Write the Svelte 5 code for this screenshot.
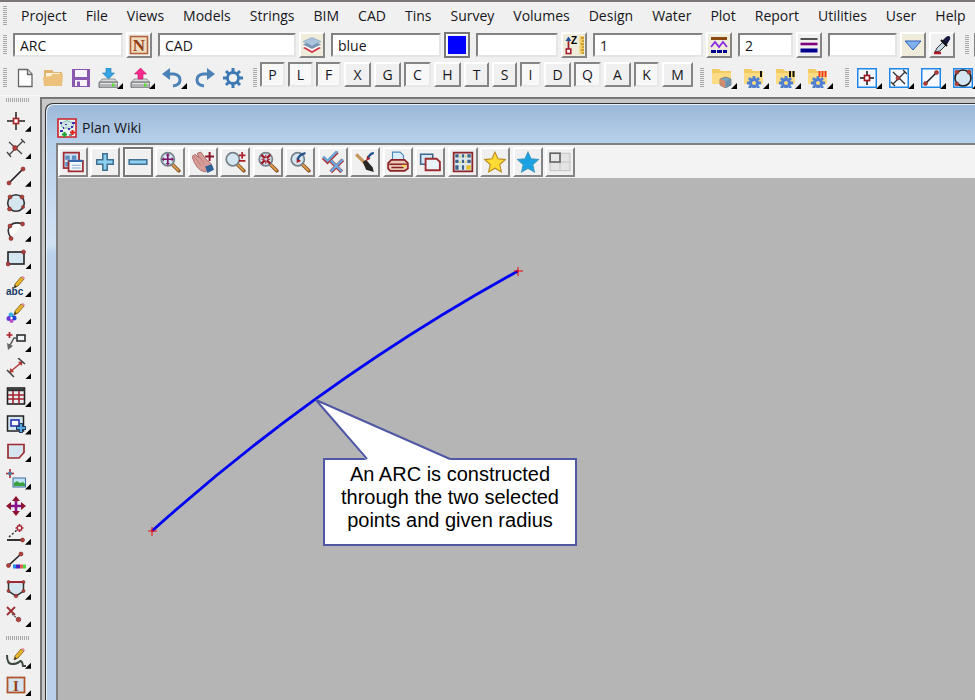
<script>
  const menus = ['Project', 'File', 'Views', 'Models', 'Strings', 'BIM', 'CAD', 'Tins', 'Survey', 'Volumes', 'Design', 'Water', 'Plot', 'Report', 'Utilities', 'User', 'Help'];

  const ball = (x, y, r = 2) => `<circle cx="${x}" cy="${y}" r="${r}" fill="#b0413c" stroke="#7a2422" stroke-width=".6"/>`;
  const folder = '<path d="M0 1h7l2 2h10v12H0z" fill="#f2cb62"/><path d="M0 5h19v11H0z" fill="#fbdc84"/>';
  const gear = '<circle cx="10" cy="15" r="3.500" fill="#fbdc84" stroke="#4f7fd0" stroke-width="3"/><path d="M10 8v4M10 18v2M3 15h3M14 15h3M5 10l2 2M15 10l-2 2M5 20l2-2M15 20l-2-2" stroke="#4f7fd0" stroke-width="2.800"/>';
  const drive = '<path d="M4 11h13l3 4H1z" fill="#d6d8da" stroke="#777" stroke-width=".7"/><rect x="1" y="14" width="19" height="6" rx="1" fill="#b2b5b8" stroke="#555" stroke-width=".8"/><path d="M2 15.500h17" stroke="#e8e8e8"/><rect x="14" y="15.500" width="2.500" height="3" fill="#53e02c"/>';
  const lens = '<path d="M12 12l6 6" stroke="#8a5a2c" stroke-width="3.400" stroke-linecap="round"/><path d="M12 12l5.500 5.500" stroke="#e4a04c" stroke-width="1.600" stroke-linecap="round"/><circle cx="8" cy="7.500" r="6" fill="#d3e6f2" stroke="#77828a" stroke-width="1.600"/>';
  const pencil = '<path d="M8 12l1-4 6-7 3 2-6 7z" fill="#e7b52c" stroke="#7c5a12" stroke-width=".8"/><path d="M15 1l2-1 2 2-1 1.500z" fill="#d98a94"/><path d="M8 12l1-3 2 1.500z" fill="#333"/>';
  const frame = '<rect x=".750" y=".750" width="18.500" height="18.500" fill="#f6f9fd" stroke="#1e86e8" stroke-width="1.500"/>';
  const shade = '#d5e6f0';

  const art = {
    namePick: '<rect x="1.500" y="1.500" width="17" height="17" fill="#f0dcc0" stroke="#b4653a" stroke-width="1.600"/><text x="10" y="16" text-anchor="middle" font-family="Liberation Serif, serif" font-weight="bold" font-size="17" fill="#913c12">N</text>',
    layers: '<path d="M1 13l9-4 9 4-9 5z" fill="#cf3340"/><path d="M1 11l9-4 9 4-9 5z" fill="#fff"/><path d="M1 9.500l9-4 9 4-9 4.500z" fill="#7895b0"/><path d="M1 6.500l9-4 9 4-9 4.500z" fill="#a9c4dc" stroke="#7d9db8" stroke-width=".6"/>',
    colour: '<path fill="#00f" d="M1 1h18v18H1z"/>',
    height: '<path d="M4.500 3v12" stroke="#9c2630" stroke-width="1.800"/><path d="M1.500 6l3-4.500 3 4.500z" fill="#235a9a"/><rect x="2.300" y="14" width="4.500" height="4.500" fill="#fff" stroke="#a4202c" stroke-width="1.600"/><text x="7" y="8.500" font-family="Liberation Sans, sans-serif" font-size="10" font-weight="bold">Z</text><path d="M15.500 1H20v18h-4.500z" fill="#f3cc62"/><path d="M20 3h-3M20 6h-2M20 9h-3M20 12h-2M20 15h-3M20 18h-2" stroke="#9c7014"/>',
    weights: '<path d="M2 3.500h16" stroke="#8a4a12" stroke-width="3"/><path d="M2 12l4-5 4 5 4-5 4 5" fill="none" stroke="#8a2be2" stroke-width="1.800"/><path d="M2 16.500h16" stroke="#000090" stroke-width="3" stroke-dasharray="5 1"/>',
    lines: '<path d="M1.500 4h17" stroke="#111" stroke-width="1.400"/><path d="M1.500 9h17" stroke="#800080" stroke-width="2.600"/><path d="M1.500 15.500h17" stroke="#000090" stroke-width="4"/>',
    drop: '<path d="M2 6h16l-8 9z" fill="#7fb0f0" stroke="#2c5fb4"/>',
    dropper: '<path d="M3 17l2-4 6-6 3 3-6 6z" fill="#c8d8e4" stroke="#333"/><path d="M10 6l4-4q3-2 4 0t-1 4l-3 5z" fill="#16183c"/><path d="M2 18h7" stroke="#b01828" stroke-width="2.500"/><path d="M9 5l6 6" stroke="#111" stroke-width="2"/>',
    file: '<path d="M3.500 1.500h9l4.500 4.500v12.500H3.500z" fill="#fff" stroke="#666" stroke-width="1.300"/><path d="M12.500 1.500v5H17" fill="#ddd" stroke="#666" stroke-width="1.300"/>',
    open: '<path d="M1 2h8l2 2h8v5H1z" fill="#e0b470"/><path d="M3 5h14v8H3z" fill="#fff3dc"/><path d="M0 9l8-1 1-2h11l-1 12H1z" fill="#ecc17c"/>',
    save: '<path d="M1 1h18v18H1z" fill="#8a57b0"/><path d="M4 2h12v7H4z" fill="#f7f2fa"/><path d="M4 12h12v6H4z" fill="#f7f2fa"/><path d="M6 13.500h3V18H6z" fill="#8a57b0"/>',
    load: drive + '<path d="M8 0h5v5h3.500l-6 6-6-6H8z" fill="#35a5e4" stroke="#1b74ae" stroke-width=".6"/>',
    send: drive + '<path d="M8 11h5V6h3.500l-6-6-6 6H8z" fill="#fa2a8c" stroke="#c01064" stroke-width=".6"/>',
    undo: '<path d="M4 6h8q6 1 6 6t-7 6" fill="none" stroke="#4a82b8" stroke-width="3"/><path d="M8 0v12L0 6z" fill="#4a82b8"/>',
    redo: '<path d="M16 6H8q-6 1-6 6t7 6" fill="none" stroke="#4a82b8" stroke-width="3"/><path d="M12 0v12l8-6z" fill="#4a82b8"/>',
    cog: '<circle cx="10" cy="10" r="5.500" fill="none" stroke="#3d79b4" stroke-width="2.800"/><path d="M10 0v4M10 16v4M0 10h4M16 10h4M3 3l3 3M14 14l3 3M17 3l-3 3M6 14l-3 3" stroke="#3d79b4" stroke-width="3"/>',
    fold0: folder + '<path d="M8 11l5.500-2 5.500 2v6l-5.500 3L8 17z" fill="#76a5c4" stroke="#7a6a60" stroke-width=".7"/><path d="M8 11l5.500 2v7L8 17z" fill="#d48a6c"/><path d="M13.500 13l5.500-2v6l-5.500 3z" fill="#6a92ae"/>',
    fold1: folder + gear + '<path d="M17 3v6" stroke="#111" stroke-width="2"/>',
    fold2: folder + gear + '<path d="M14 3v6M17.500 3v6" stroke="#111" stroke-width="2"/>',
    fold3: folder + gear + '<path d="M11.500 3v6M14.500 3v6M17.500 3v6" stroke="#f03020" stroke-width="1.800"/>',
    snapPoint: frame + '<path d="M10 3v5M10 12v5M3 10h5M12 10h5" stroke="#111" stroke-width="1.500"/><rect x="7.500" y="7.500" width="5" height="5" fill="#fff" stroke="#a01822" stroke-width="1.700"/>',
    snapCross: frame + '<path d="M4 16L16 4M4 4l12 12M2 14l4 4M14 2l4 4" stroke="#333" stroke-width="1.300"/>' + ball(9, 10),
    snapLine: frame + '<path d="M4 16L16 4" stroke="#222" stroke-width="1.600"/>' + ball(4.5, 15.5) + ball(15.5, 4.5),
    snapRing: frame + `<circle cx="10" cy="10" r="8" fill="${shade}" stroke="#222" stroke-width="1.600"/>` + ball(4, 4) + ball(16, 4) + ball(4, 16),
    point: '<path d="M10 1v6M10 13v6M1 10h6M13 10h6" stroke="#222" stroke-width="1.500"/><rect x="7.500" y="7.500" width="5" height="5" fill="#fff" stroke="#a52a2a" stroke-width="1.700"/>',
    cross: '<path d="M3 17L17 3M3 4l13 12M1 14l4 5M15 1l4 4" stroke="#444" stroke-width="1.300"/>' + ball(9, 10, 2.4),
    line: '<path d="M3 17L17 3" stroke="#222" stroke-width="1.700"/>' + ball(3, 17) + ball(17, 3),
    circle: `<circle cx="10" cy="10" r="8.300" fill="${shade}" stroke="#333" stroke-width="1.600"/>` + ball(4, 4) + ball(16, 4) + ball(3.5, 16) + ball(17, 14, 1.5),
    arc: '<path d="M5 17Q0 10 4 5t13-2" fill="#fff" stroke="#333" stroke-width="1.600"/>' + ball(5, 17.5) + ball(4, 5) + ball(16.5, 3),
    rect: `<rect x="2" y="4" width="16" height="12" fill="${shade}" stroke="#222" stroke-width="1.600"/>` + ball(17.5, 4) + ball(2, 16),
    text: pencil + '<text x="0" y="19" font-family="Liberation Sans, sans-serif" font-size="10" font-weight="bold" fill="#173a66">abc</text>',
    paint: pencil + '<circle cx="5" cy="12" r="2.500" fill="#3ab0e8"/><circle cx="3" cy="15.500" r="2.500" fill="#6a35d8"/><circle cx="8" cy="15" r="2.500" fill="#2340d8"/><circle cx="5.500" cy="18" r="2" fill="#c050c8"/><circle cx="5.500" cy="15" r="1.200" fill="#fff"/>',
    leader: '<path d="M3.500 1v6M.5 4h6" stroke="#b02028" stroke-width="1.700"/><rect x="11" y="4" width="8" height="6" fill="#eef4f8" stroke="#222" stroke-width="1.500"/><path d="M11 7H8l-5 9" fill="none" stroke="#555" stroke-width="1.500"/><path d="M1 12l1 7 5-4z" fill="#666"/>',
    dim: '<path d="M4 14L16 4" stroke="#b33a34" stroke-width="1.500"/><path d="M3 15l1.500-5 3.500 4zM17 3l-1.500 5-3.500-4z" fill="#b33a34"/><path d="M1 12l7 7M12 0l7 6" stroke="#444" stroke-width="1.600"/>',
    grid: '<rect x="1.500" y="2" width="17" height="16" fill="#e6eef2" stroke="#222" stroke-width="1.600"/><path d="M1 4h18" stroke="#333" stroke-width="2.500"/><path d="M2 9h16M2 13h16M7 5v13M13 5v13" stroke="#a52330" stroke-width="1.600"/>',
    group: `<rect x="1.500" y="2" width="16" height="15" fill="${shade}" stroke="#222" stroke-width="1.500"/><rect x="5" y="6" width="8" height="6" fill="#fff" stroke="#2430b0" stroke-width="1.600"/><path d="M15 9v10M10 14h10" stroke="#23406a" stroke-width="4"/><path d="M15 10v8M11 14h8" stroke="#5aa8e0" stroke-width="2"/>`,
    polygon: `<path d="M2 3.500h16v8L13 17H2z" fill="${shade}" stroke="#9c2c30" stroke-width="1.700"/>`,
    image: '<path d="M4 0v9M0 4.500h8" stroke="#b02028" stroke-width="1.600"/><circle cx="4" cy="4.500" r="2" fill="#4c7a9c"/><rect x="7" y="9" width="12.500" height="9" fill="#bfe3fa" stroke="#3c6c9c"/><path d="M8 17v-3l3-2 3 2 3-1 2 2v2z" fill="#3ca03c"/>',
    move: '<path d="M10 2v16M2 10h16" stroke="#8a108a" stroke-width="2.600"/><path d="M10 0l4 5H6zM10 20l4-5H6zM0 10l5-4v8zM20 10l-5-4v8z" fill="#8c1832"/>',
    offset: '<path d="M13.500 0v8M9.500 4h8" stroke="#a52330" stroke-width="1.600"/><rect x="11.500" y="2" width="4" height="4" fill="#fff" stroke="#a52330" stroke-width="1.300"/><path d="M3 13l8-7" stroke="#333" stroke-width="1.500" stroke-dasharray="2 2"/><path d="M1 16h16" stroke="#333" stroke-width="2"/>' + ball(16.5, 16),
    spectrum: '<path d="M3 14L15 3" stroke="#222" stroke-width="1.600"/>' + ball(2.5, 14.5) + ball(15, 3) + '<path d="M7 13.500h3v4H7z" fill="#2090f0"/><path d="M10 13.500h4v4h-4z" fill="#4a20c0"/><path d="M14 13.500h3v4h-3z" fill="#e85a5a"/><path d="M17 13.500h3v4h-3z" fill="#50d840"/>',
    shield: `<path d="M2.500 3h15v9L10 17l-7.500-5z" fill="${shade}" stroke="#333" stroke-width="1.500"/><path d="M2.500 3h15" stroke="#a52330" stroke-width="1.800"/>` + ball(2.5, 3, 1.5) + ball(17.5, 3, 1.5) + ball(2.5, 12, 1.5) + ball(17.5, 12, 1.5) + ball(10, 17, 1.8),
    remove: '<path d="M1 1l8 8M9 1L1 9" stroke="#9c2c30" stroke-width="1.800"/><path d="M6 8l6 5" stroke="#555" stroke-width="1.400" stroke-dasharray="2 1"/>' + ball(12.5, 13.5, 2.3),
    sketch: '<path d="M1 7q0 9 5 9t7-2q3-3 4 4h3" fill="none" stroke="#3a463e" stroke-width="2"/>' + pencil,
    textBox: `<rect x="1.500" y="2.500" width="17" height="15" fill="${shade}" stroke="#b0562c" stroke-width="1.800"/><text x="10" y="15.500" text-anchor="middle" font-family="Liberation Serif, serif" font-weight="bold" font-size="15" fill="#97401c">I</text>`,
    plan: '<path fill="#e8f4f0" stroke="#cc2028" stroke-width="1.600" d="M1 1h18v18H1z"/><path d="M5 9q-2-4 2-5 3-3 6 0 5 0 3 5-3 3-6 1-4 1-5-1z" fill="#cfe6e4" stroke="#7fb8b0"/><path d="M3 4h2v2H3zM15 4h3v2h-3zM3 12h3v2H3zM11 10h2v2h-2zM8 6h2v1H8zM6 9h1v2H6zM14 8h2v2h-2z" fill="#4428b0"/><path d="M13 14.500h5M15.500 12v5" stroke="#e02020" stroke-width="2"/><path d="M5 16.500h5M7.500 14v5" stroke="#18a030" stroke-width="2"/><path d="M12 17h3" stroke="#222"/>',
    views: '<rect x="1.500" y="1.500" width="14" height="14" fill="#cfe2f4" stroke="#9c2c30" stroke-width="1.600"/><path d="M3 4h4v4H3zM9 4h4v4H9zM3 10h3v4H3z" fill="#5c8cc4"/><rect x="6" y="9" width="13" height="9.500" fill="#f3f8fc" stroke="#9c2c30" stroke-width="1.600"/><path d="M6 9h13" stroke="#3868a8" stroke-width="2"/><path d="M9 13h8M9 15.500h8" stroke="#8ba8c4"/>',
    plus: '<path d="M8 2.500h4V8h5.500v4H12v5.500H8V12H2.500V8H8z" fill="#8fd0f2" stroke="#3f7092" stroke-width="1.400"/>',
    minus: '<path d="M2 8h16v4H2z" fill="#8fd0f2" stroke="#3f7092" stroke-width="1.400"/>',
    zoomAll: lens + '<path d="M8 3v9M3.500 7.500h9" stroke="#7c1468" stroke-width="1.500"/><path d="M8 2l2 2H6zM8 13l2-2H6zM2.500 7.500l2-2v4zM13.500 7.500l-2-2v4z" fill="#7c1468"/>',
    pan: '<path d="M0 5l3-2 3 3-1-4 3-1 6 8 3 2 1 4-6 4Q4 18 0 5z" fill="#d69c98" stroke="#a6645f" stroke-width=".8"/><path d="M2 5l6 8M5 3l6 8" stroke="#b87874" stroke-width=".8"/><path d="M12 14l6-2 2 5-6 3z" fill="#2c6096"/><path d="M16 1v8M12 5h8" stroke="#8c1428" stroke-width="1.800"/>',
    zoomStep: lens + '<path d="M16.500 1v6M13.500 4h6M13.500 9h6" stroke="#a82028" stroke-width="1.500"/>',
    zoomFit: lens + '<path d="M4 3.500l3 3M12 3.500l-3 3M4 11.500l3-3M12 11.500l-3-3" stroke="#a01420" stroke-width="2"/><path d="M4 7.500h3M9 7.500h3M8 3.500v3M8 8.500v3" stroke="#a01420"/>',
    zoomBack: lens + '<path d="M7 6v5l4-2z" fill="#a82028"/><path d="M8 8q1-5 7-6" fill="none" stroke="#20508c" stroke-width="2"/>',
    checks: '<path d="M1 6l4 4 9-9" fill="none" stroke="#b03038" stroke-width="3.200"/><path d="M1 5l4 4 9-9" fill="none" stroke="#6aa8dc" stroke-width="2.200"/><path d="M8 9l10 10M19 8L8 19" stroke="#b03038" stroke-width="3.400"/><path d="M8 8.500l10 10M19 7.500l-11 11" stroke="#6aa8dc" stroke-width="2.200"/>',
    brush: '<path d="M2 3l9 9" stroke="#c4955c" stroke-width="3"/><path d="M8 10l3-2 6 7 1 4-7-2z" fill="#2a2623"/><path d="M11 9l1-5 3 3z" fill="#b02028"/><path d="M13 6q2-4 5-4" fill="none" stroke="#20508c" stroke-width="2"/>',
    print: '<path d="M5 9V1h7l3 3v5z" fill="#d8ecfa" stroke="#4a86b8"/><path d="M4 8h12l3 3v5l-3 2H3l-2-2v-5z" fill="#e6c9b8" stroke="#8c2024" stroke-width="1.500"/><path d="M2 12h16M4 15h11" stroke="#8c2024" stroke-width="1.500"/><path d="M14 13.500h3" stroke="#ffda40" stroke-width="2"/>',
    copy: '<path d="M1.500 3h11v9h-11z" fill="#d7e9f5" stroke="#3c648c" stroke-width="1.400"/><path d="M6 7h10l3 3v7.500H6z" fill="#eaf4f8" stroke="#9c2c30" stroke-width="1.700"/>',
    matrix: '<path d="M1.500 1.500h17v17h-17z" fill="#dce8ee" stroke="#8c2428" stroke-width="1.600"/><path d="M3 3h3v3H3zM9 3h2v3H9zM14 3h3v3h-3zM3 8h3v3H3zM9 8h2v3H9zM14 8h3v3h-3zM3 13h3v4H3zM9 13h2v4H9z" fill="#3c6488"/><path d="M7 4h1v2H7zM12 4h1v2h-1zM7 9h1v2H7zM12 9h1v2h-1zM13 13h4v4h-4z" fill="#e5c22c"/>',
    star: '<path d="M10 1l2.700 6.100 6.600.7-5 4.500 1.500 6.700L10 15.600 4.200 19l1.500-6.700-5-4.500 6.600-.7z" fill="#ffdb35" stroke="#b98a1c"/>',
    starBlue: '<path d="M10 1l2.700 6.100 6.600.7-5 4.500 1.500 6.700L10 15.600 4.200 19l1.500-6.700-5-4.500 6.600-.7z" fill="#1ba2e2" stroke="#3a9ac4"/>',
    panes: '<path d="M1 2h18v16H1z" fill="#e4e4e4" stroke="#c4c4c4"/><path d="M10 2v16M1 10h18" stroke="#c4c4c4"/><rect x="1" y="2" width="9" height="8" fill="#e8e8e8" stroke="#666" stroke-width="1.500"/>'
  };

  const fields = [
    { label: 'Name', value: 'ARC', size: 'w110', icon: 'namePick' },
    { label: 'Model', value: 'CAD', size: 'w138', icon: 'layers', paper: true },
    { label: 'Colour', value: 'blue', size: 'w110', icon: 'colour', deep: true },
    { label: 'Height', value: '', size: 'w82', icon: 'height', paper: true },
    { label: 'Style', value: '1', size: 'w110', icon: 'weights', paper: true },
    { label: 'Weight', value: '2', size: 'w55', icon: 'lines' },
    { label: 'Tinable', value: '', size: 'w69', icon: 'drop', paper: true }
  ];
  const fileTools = [['file'], ['open'], ['save'], ['load', 1], ['send', 1], ['undo', 1], ['redo'], ['cog']];
  const letters = [...'PLFXGCHTSIDQAKM'];
  let active = $state([...'PLFCIQK']);
  const toggle = (k) => (active = active.includes(k) ? active.filter((a) => a !== k) : [...active, k]);
  const size = (k) => (k === 'I' ? 'thin' : k === 'M' ? 'wide' : 'PLFTSK'.includes(k) ? 'small' : 'mid');
  const folders = ['fold0', 'fold1', 'fold2', 'fold3'];
  const snaps = ['snapPoint', 'snapCross', 'snapLine', 'snapRing'];
  const side = ['point', 'cross', 'line', 'circle', 'arc', 'rect', 'text', 'paint', 'leader', 'dim', 'grid', 'group', 'polygon', 'image', 'move', 'offset', 'spectrum', 'shield', 'remove'];
  const viewTools = ['views', 'plus', 'minus', 'zoomAll', 'pan', 'zoomStep', 'zoomFit', 'zoomBack', 'checks', 'brush', 'print', 'copy', 'matrix', 'star', 'starBlue', 'panes'];
</script>

{#snippet icon(name)}
  <svg class="icon" viewBox="0 0 20 20" aria-hidden="true">{@html art[name]}</svg>
{/snippet}

{#snippet tool(name, more)}
  <button class="tool" class:more aria-label={name}>{@render icon(name)}</button>
{/snippet}

<div class="app">
  <nav class="menu">
    <span class="grip"></span>
    {#each menus as m}<button>{m}</button>{/each}
  </nav>

  <div class="fields">
    <span class="grip"></span>
    {#each fields as f}
      <input class={f.size} aria-label={f.label} value={f.value} />
      <button class="raised" class:paper={f.paper} class:deep={f.deep} aria-label={`Choose ${f.label}`}>{@render icon(f.icon)}</button>
    {/each}
    <button class="raised last" aria-label="Pick from drawing">{@render icon('dropper')}</button>
    <span class="grip end"></span>
    <input class="w110" aria-label="Text style" />
  </div>

  <div class="tools">
    <span class="grip"></span>
    <div class="group lead">{#each fileTools as [n, more]}{@render tool(n, !!more)}{/each}</div>
    <span class="grip"></span>
    <div class="letters">
      {#each letters as k}
        <button class={['key', size(k)]} class:on={active.includes(k)} aria-pressed={active.includes(k)} onclick={() => toggle(k)}>{k}</button>
      {/each}
    </div>
    <span class="grip"></span>
    <div class="group">{#each folders as n}{@render tool(n, true)}{/each}</div>
    <span class="grip"></span>
    <div class="group">{#each snaps as n}{@render tool(n, true)}{/each}</div>
  </div>

  <div class="body">
    <aside>
      <span class="grip flat"></span>
      <div class="stack">{#each side as n}{@render tool(n, true)}{/each}</div>
      <span class="grip flat"></span>
      <div class="stack pair">{#each ['sketch', 'textBox'] as n}{@render tool(n, true)}{/each}</div>
    </aside>

    <main>
      <section class="window">
        <header>{@render icon('plan')}<span>Plan Wiki</span></header>
        <div class="view">
          <div class="viewbar">
            {#each viewTools as n}
              <button class="raised big" class:deep={n === 'minus'} aria-label={n}>{@render icon(n)}</button>
            {/each}
          </div>
          <div class="canvas">
            <svg class="drawing" aria-label="Arc through two points">
              <path d="M94 353Q262 202 460 93" fill="none" stroke="#0000f4" stroke-width="2.800" />
              <path d="M90 353h9M94 349v9M456 93h9M460 89v9" stroke="#f00000" />
            </svg>
            <p class="callout">An ARC is constructed through the two selected points and given radius</p>
            <svg class="drawing" aria-hidden="true">
              <path d="M308 282L258 222L393 282" fill="#fff" />
              <path d="M309 281L258 222L392 281" fill="none" stroke="#5058a4" stroke-width="2" />
            </svg>
          </div>
        </div>
      </section>
    </main>
  </div>
</div>

<style>
  :global(body) { margin: 0; }
  .app {
    height: 100vh;
    box-sizing: border-box;
    display: flex;
    flex-direction: column;
    overflow: hidden;
    background: #f0f0f0;
    border-top: 2px solid #7c7678;
    font: 14px/20px "Open Sans", "Noto Sans", sans-serif;
    color: #161620;
  }
  button { font: inherit; color: inherit; margin: 0; padding: 0; border: 0; background: none; flex: none; box-sizing: border-box; }
  .icon { width: 20px; height: 20px; display: block; flex: none; }
  .grip {
    flex: none;
    width: 4px;
    height: 20px;
    background: repeating-linear-gradient(#a8a8a8 0 1px, #f0f0f0 1px 2px);
  }
  .grip.flat {
    width: 24px;
    height: 4px;
    background: repeating-linear-gradient(90deg, #a8a8a8 0 1px, #f0f0f0 1px 2px);
  }

  .menu { display: flex; align-items: center; height: 28px; padding-left: 3px; flex: none; gap: 19px; }
  .menu .grip { margin-right: -5px; }

  .fields { display: flex; align-items: center; height: 30px; padding-left: 3px; flex: none; }
  .fields .grip { margin-right: 6px; }
  .fields .end { margin: 0 5px 0 10px; }
  input {
    box-sizing: border-box;
    height: 24px;
    flex: none;
    font: inherit;
    color: inherit;
    padding: 0 5px;
    background: #fff;
    border: 2px solid;
    border-color: #828282 #e4e4e4 #e4e4e4 #828282;
    border-radius: 0;
    outline: 0;
  }
  .w110 { width: 110px; }
  .w138 { width: 138px; }
  .w82 { width: 82px; }
  .w55 { width: 55px; }
  .w69 { width: 69px; }
  .raised {
    width: 26px;
    height: 26px;
    border: 2px solid;
    border-color: #fff #858585 #858585 #fff;
    background: #f0f0f0;
    display: flex;
    align-items: center;
    justify-content: center;
  }
  .fields .raised { margin: 0 6px 0 3px; }
  .fields .raised:nth-last-child(4), .fields .raised.last { margin-right: 0; }
  .raised.paper { background: #f0ecdc; }
  .raised.deep { border-color: #777; box-shadow: inset 1px 1px #fff; }

  .tools { display: flex; align-items: flex-start; height: 35px; padding: 2px 0 0 3px; box-sizing: border-box; flex: none; }
  .tools .grip { margin-top: 6px; }
  .tools .group { display: flex; margin: 5px 8px 0 5px; }
  .tools .group.lead { margin: 5px 6px 0 4px; }
  .tool { width: 28px; height: 22px; display: flex; align-items: center; justify-content: center; position: relative; }
  .tool.more { width: 32px; justify-content: flex-start; padding-left: 3px; }
  .tool.more::after {
    content: "";
    position: absolute;
    right: 4px;
    bottom: 0;
    width: 6px;
    height: 6px;
    background: #000;
    clip-path: polygon(100% 0, 100% 100%, 0 100%);
  }
  .letters { display: flex; gap: 3px; margin: 0 7px 0 3px; }
  .key {
    height: 25px;
    line-height: 19px;
    border: 2px solid;
    border-color: #fff #858585 #858585 #fff;
  }
  .key.on { border-color: #858585 #e8e8e8 #e8e8e8 #858585; background: #f8f8f8; }
  .thin { width: 21px; }
  .small { width: 25px; }
  .mid { width: 27px; }
  .wide { width: 31px; }

  .body { flex: 1; min-height: 0; display: flex; }
  aside { width: 37px; padding: 2px 0 0 3px; flex: none; display: flex; flex-direction: column; border-top: 1px solid #f8f8f8; }
  aside .grip { margin-left: 3px; }
  .stack { display: grid; grid-auto-rows: 1fr; align-items: center; flex: none; height: 523px; margin: 5px 0 6px; }
  .stack.pair { height: 55px; margin-top: 4px; }
  main {
    flex: 1;
    min-width: 0;
    margin-top: 2px;
    border: solid #767676;
    border-width: 2px 0 0 2px;
    background: #c8c8c8;
    padding: 4px 0 0 3px;
    display: flex;
  }
  .window {
    flex: 1;
    min-width: 0;
    display: flex;
    flex-direction: column;
    border: solid #333;
    border-width: 1px 0 0 1px;
    border-top-left-radius: 8px;
    box-shadow: inset 1px 1px #e8f0f8;
    background: linear-gradient(#9bb7d8, #b7d0ea 38px, #d2e2f4 140px, #b9d1ea 150px);
    padding-left: 10px;
  }
  header { height: 39px; display: flex; align-items: center; gap: 5px; padding: 8px 0 0 1px; box-sizing: border-box; }
  .view { flex: 1; min-height: 0; display: flex; flex-direction: column; border: solid #808080; border-width: 2px 0 0 2px; }
  .viewbar { height: 33px; flex: none; display: flex; align-items: center; background: #f3f3f3; }
  .raised.big { width: 30px; height: 30px; margin-right: 2px; }
  .raised.big:nth-child(even) { margin-right: 3px; }
  .big .icon { width: 22px; height: 22px; }
  .canvas { flex: 1; min-height: 0; position: relative; background: #b5b5b5; overflow: hidden; }
  .drawing { position: absolute; inset: 0; width: 100%; height: 100%; }
  .callout {
    position: absolute;
    left: 265px;
    top: 280px;
    width: 254px;
    height: 88px;
    box-sizing: border-box;
    margin: 0;
    padding: 3px 14px;
    border: 2px solid #5058a4;
    background: #fff;
    color: #000;
    text-align: center;
    font: 20px/23px "Liberation Sans", Arial, sans-serif;
  }
</style>
